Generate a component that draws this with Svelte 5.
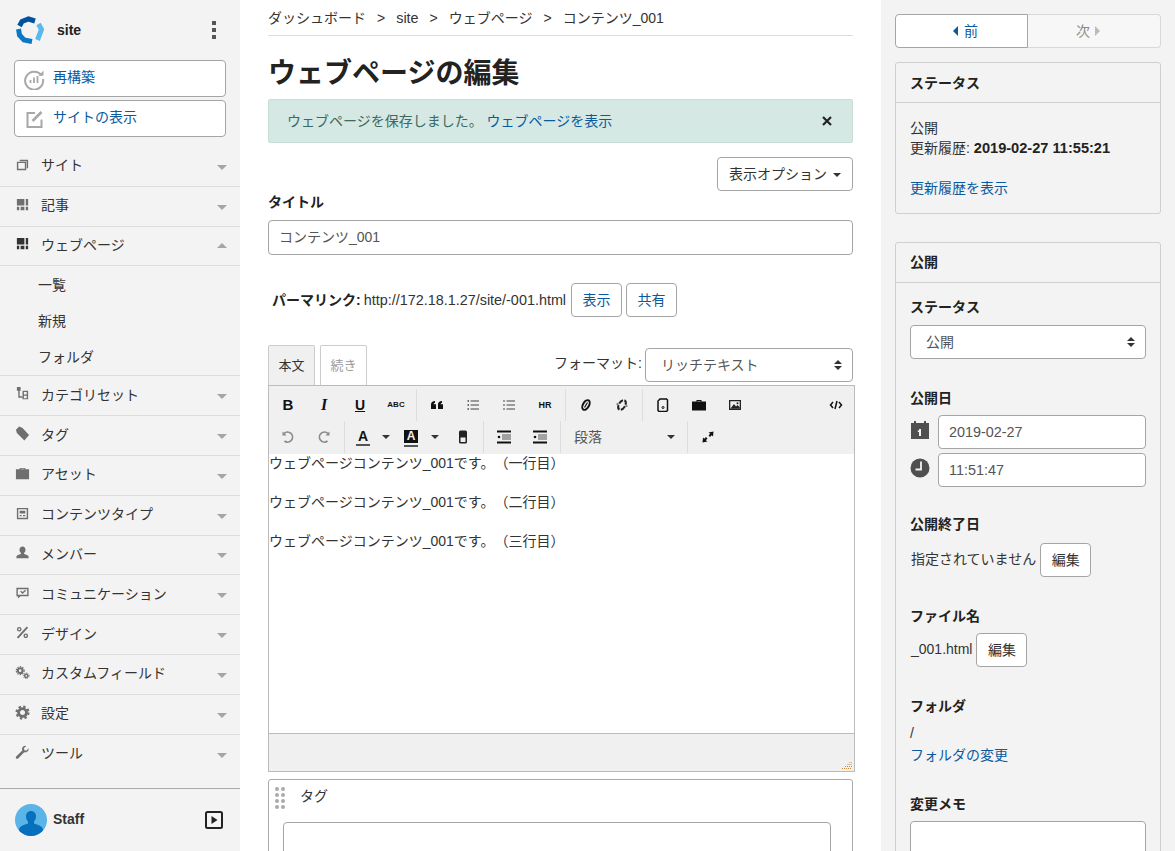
<script>
  const nav = [
    { label: 'サイト', icon: 'site' },
    { label: '記事', icon: 'entry' },
    { label: 'ウェブページ', icon: 'page', open: true, children: ['一覧', '新規', 'フォルダ'] },
    { label: 'カテゴリセット', icon: 'tree' },
    { label: 'タグ', icon: 'tag' },
    { label: 'アセット', icon: 'case' },
    { label: 'コンテンツタイプ', icon: 'ctype' },
    { label: 'メンバー', icon: 'user' },
    { label: 'コミュニケーション', icon: 'comment' },
    { label: 'デザイン', icon: 'design' },
    { label: 'カスタムフィールド', icon: 'gears' },
    { label: '設定', icon: 'gear' },
    { label: 'ツール', icon: 'wrench' }
  ]

  const crumbs = ['ダッシュボード', 'site', 'ウェブページ', 'コンテンツ_001']
  const lines = ['一行目', '二行目', '三行目']
</script>

{#snippet navIcon(name)}
  <svg class="nav-icon" viewBox="0 0 16 16" fill="#6f6f6f">
    {#if name === 'site'}
      <path d="M5 3h9v9h-1.500V4.500H5z" />
      <path fill-rule="evenodd" d="M2 5h10v9H2zM3.500 6.500v6h7v-6z" />
    {:else if name === 'entry' || name === 'page'}
      <g fill={name === 'page' ? '#333' : '#6f6f6f'}>
        <path d="M2 2h8v7H2zM11.500 2H14v7h-2.500zM2 10.500h2.500V14H2zM6 10.500h4V14H6zM11.500 10.500H14V14h-2.500z" />
      </g>
    {:else if name === 'tree'}
      <path d="M2 1h4v4H5v6h3v1.500H3.500V5H2z" />
      <path fill-rule="evenodd" d="M8 5h6v9H8zM9.500 6.500V9h3V6.500zM9.500 10.500V13h3v-2.500z" />
    {:else if name === 'tag'}
      <path d="M1 4 4.500.5 8 2l7 7.500-5 6L2 7.500z" />
    {:else if name === 'case'}
      <path fill-rule="evenodd" d="M5 3.500V2h6v1.500h4V14H1V3.500zM6 3.500h4V3H6z" />
    {:else if name === 'ctype'}
      <path fill-rule="evenodd" d="M2 2h12v12H2zM3.500 3.500v9h9v-9zM5 5h6v3H5zM5 9.500h2V11H5zM8.500 9.500H11V11H8.500z" />
    {:else if name === 'user'}
      <path d="M8 1.500c2 0 3.200 1.500 3.200 3.600 0 1.500-.6 2.700-1.500 3.400v1.200c2 .5 4.800 1.200 4.800 2.800v1.500h-13V12.500c0-1.600 2.800-2.300 4.800-2.800V8.500c-.9-.7-1.500-1.900-1.500-3.400C4.800 3 6 1.500 8 1.500z" />
    {:else if name === 'comment'}
      <path fill-rule="evenodd" d="M1.500 3h13v9H6l-3 2.500V12H1.500zM3 4.500v6h10v-6z" />
      <path d="m5.500 7 1-1L8 7.500 11 5l.8 1L8 9.500z" />
    {:else if name === 'design'}
      <path d="M12.500 1.500 14 3 3.500 14.500 2 13z" />
      <path fill-rule="evenodd" d="M4.500 2a2.500 2.500 0 1 1 0 5 2.500 2.500 0 0 1 0-5zM11.500 9a2.500 2.500 0 1 1 0 5 2.500 2.500 0 0 1 0-5zM4.500 3.500a1 1 0 1 0 0 2 1 1 0 0 0 0-2zM11.500 10.500a1 1 0 1 0 0 2 1 1 0 0 0 0-2z" />
    {:else if name === 'gears'}
      <circle cx="5.500" cy="6" r="2.500" fill="none" stroke="#6f6f6f" stroke-width="2.200" />
      <circle cx="5.500" cy="6" r="4.200" fill="none" stroke="#6f6f6f" stroke-width="1.300" stroke-dasharray="1.500 1.200" />
      <circle cx="12" cy="11.500" r="1.700" fill="none" stroke="#6f6f6f" stroke-width="1.600" />
      <circle cx="12" cy="11.500" r="3" fill="none" stroke="#6f6f6f" stroke-width="1" stroke-dasharray="1.200 1" />
    {:else if name === 'gear'}
      <circle cx="8" cy="8" r="4.200" fill="none" stroke="#6f6f6f" stroke-width="3" />
      <circle cx="8" cy="8" r="6.300" fill="none" stroke="#6f6f6f" stroke-width="2.400" stroke-dasharray="2.500 2.450" />
    {:else if name === 'wrench'}
      <path d="M14.500 3.500 12 6l-2-.5L9.500 3.500 12 1C9.500.5 7.500 2 7.500 4.500c0 .6.100 1 .3 1.400L1.500 12c-.8.800-.8 1.700-.2 2.300s1.600.6 2.300-.2l6.200-6.300c2.600.8 5.200-1.400 4.700-4.300z" />
    {/if}
  </svg>
{/snippet}

{#snippet indentIcon()}
  <svg viewBox="0 0 14 14">
    <path d="M0 1.500h14M0 12.500h14" stroke="#111" stroke-width="2" />
    <path d="M5 5h9M5 7h9M5 9h9" stroke="#555" stroke-width="1.200" />
    <circle cx="2" cy="7" r="1.300" fill="#111" />
  </svg>
{/snippet}

<div class="page">
  <aside class="sidebar">
    <div class="brand">
      <svg class="logo" viewBox="0 0 30 30" fill="none" stroke-width="5">
        <path d="M4.500 11 7 6.500 13.500 4 20 6" stroke="#00529f" />
        <path d="M3.500 14 4.500 20 9 25 17 26.500" stroke="#0b78c6" />
        <path d="M23.500 9 26.500 14.500 22.500 25" stroke="#5bb8ec" />
      </svg>
      <strong>site</strong>
      <span class="kebab"><i></i><i></i><i></i></span>
    </div>

    <div class="side-actions">
      <a class="side-btn" href="#rebuild">
        <svg viewBox="0 0 22 22" fill="none" stroke="#a8a8a8">
          <path d="M18.500 7.500A9 9 0 1 0 20 11" stroke-width="2" />
          <path d="m15.500 8 5-.5V2.500z" fill="#a8a8a8" stroke="none" />
          <path d="M7.500 15v-3M11 15V9.500M14.500 15V8" stroke-width="1.800" />
        </svg>
        <span class="up-text">再構築</span>
      </a>
      <a class="side-btn" href="#view">
        <svg viewBox="0 0 22 22" fill="none" stroke="#a8a8a8" stroke-width="2">
          <path d="M12 5H4.500v14h14v-7.500" />
          <path d="M9.500 13 18.500 4" stroke-width="2.600" />
        </svg>
        サイトの表示
      </a>
    </div>

    <nav class="side-nav">
      {#each nav as item}
        <div class="nav-row">
          {@render navIcon(item.icon)}
          <span class="nav-label">{item.label}</span>
          <span class="tri" class:up={item.open}></span>
        </div>
        {#if item.children}
          <ul class="subnav">
            {#each item.children as child}
              <li>{child}</li>
            {/each}
          </ul>
        {/if}
      {/each}
    </nav>

    <div class="user">
      <svg class="avatar" viewBox="0 0 32 32">
        <defs><clipPath id="round"><circle cx="16" cy="16" r="16" /></clipPath></defs>
        <g clip-path="url(#round)">
          <rect width="32" height="32" fill="#5ab4e8" />
          <path d="M16 7c3 0 5 2.300 5 5.500 0 2.200-.9 3.900-2 5v2c3.500 1 9 2.500 9 6.500v6H4v-6c0-4 5.500-5.500 9-6.500v-2c-1.100-1.100-2-2.800-2-5C11 9.300 13 7 16 7z" fill="#0670bd" />
        </g>
      </svg>
      <strong>Staff</strong>
      <svg class="play" viewBox="0 0 18 18">
        <rect x="1" y="1" width="16" height="16" rx="1.500" fill="none" stroke="#222" stroke-width="2" />
        <path d="M6.500 5v8l6-4z" fill="#222" />
      </svg>
    </div>
  </aside>

  <main class="content">
    <div class="crumbs">
      {#each crumbs as crumb, i}
        {#if i > 0}<span class="sep">&gt;</span>{/if}
        <span class:latin={crumb === 'site'}>{crumb}</span>
      {/each}
    </div>

    <h1>ウェブページの編集</h1>

    <div class="alert">
      <span>ウェブページを保存しました。 <a href="#page">ウェブページを表示</a></span>
      <svg viewBox="0 0 10 10" stroke="#222" stroke-width="2.200"><path d="m1 1 8 8M9 1 1 9" /></svg>
    </div>

    <div class="options">
      <button class="option-btn">表示オプション <span class="caret"></span></button>
    </div>

    <div class="label title-label">タイトル</div>
    <div class="input">コンテンツ_001</div>

    <div class="permalink">
      <strong>パーマリンク:</strong>
      <span class="url">http://172.18.1.27/site/-001.html</span>
      <button class="small-btn link">表示</button>
      <button class="small-btn link">共有</button>
    </div>

    <div class="editor-head">
      <div class="tab active">本文</div>
      <div class="tab">続き</div>
      <div class="format">
        <span class="format-label">フォーマット:</span>
        <div class="select format-select">リッチテキスト<span class="updown"></span></div>
      </div>
    </div>

    <div class="editor">
      <div class="toolbar">
        <div class="tool-row">
          <span class="tool b">B</span>
          <span class="tool i">I</span>
          <span class="tool u">U</span>
          <span class="tool mini">ABC</span>
          <span class="divider"></span>
          <span class="tool">
            <svg viewBox="0 0 14 14" fill="#111"><path d="M1 11V6.500C1 4.500 2.500 3 5 3v2c-.8 0-1.300.5-1.300 1.300H6V11zM8 11V6.500C8 4.500 9.500 3 12 3v2c-.8 0-1.300.5-1.300 1.300H13V11z" /></svg>
          </span>
          <span class="tool">
            <svg viewBox="0 0 14 14" stroke="#444" stroke-width="1.200"><path d="M4.500 3H13M4.500 7H13M4.500 11H13" /><path d="M1.500 3h1.500M1.500 7h1.500M1.500 11h1.500" stroke-width="1.500" /></svg>
          </span>
          <span class="tool">
            <svg viewBox="0 0 14 14" stroke="#444" stroke-width="1.200"><path d="M4.500 3H13M4.500 7H13M4.500 11H13M1 3h2M1 7h2M1 11h2" /></svg>
          </span>
          <span class="tool mini hr">HR</span>
          <span class="divider"></span>
          <span class="tool">
            <svg viewBox="0 0 14 14" fill="none" stroke="#111" stroke-width="2"><ellipse cx="7" cy="7" rx="3" ry="5.300" transform="rotate(30 7 7)" /><path d="M5.500 9.500 8.500 4.500" stroke-width="1.200" /></svg>
          </span>
          <span class="tool">
            <svg viewBox="0 0 14 14" fill="none" stroke="#222" stroke-width="2"><ellipse cx="7" cy="7" rx="3.200" ry="5.300" transform="rotate(30 7 7)" stroke-dasharray="5 1.500" /><path d="M1.500 6h2M10.500 8h2" stroke-width="1.200" /></svg>
          </span>
          <span class="divider"></span>
          <span class="tool">
            <svg viewBox="0 0 14 14" fill="none" stroke="#111" stroke-width="1.500"><path d="M4 1h6.500l1 1v10.500l-1 1H3l-1-1V3z" /><circle cx="7" cy="9.500" r="1" stroke-width="1" /></svg>
          </span>
          <span class="tool">
            <svg viewBox="0 0 14 14" fill="#111"><path fill-rule="evenodd" d="M4.500 3.500V2h5v1.500H14V12.500H0V3.500zM5.500 3.500h3V3h-3z" /></svg>
          </span>
          <span class="tool">
            <svg viewBox="0 0 14 14"><path fill="#222" fill-rule="evenodd" d="M1 2h12v10H1zM2.300 3.300v7.400h9.400V3.300z" /><path fill="#222" d="M2.300 10.700 6 6l2 2.500 1.500-1.500 2.200 2.200v1.500z" /><circle cx="9.500" cy="5.200" r="1" fill="#222" /></svg>
          </span>
          <span class="spacer"></span>
          <span class="tool">
            <svg viewBox="0 0 14 14" fill="none" stroke="#111" stroke-width="1.500"><path d="M4 4 1.500 7 4 10M10 4l2.500 3L10 10M8 3 6 11" /></svg>
          </span>
        </div>
        <div class="tool-row">
          <span class="tool off">
            <svg viewBox="0 0 14 14" fill="none" stroke="#8a8a8a" stroke-width="1.700"><path d="M3 3.500A5 5 0 1 1 3.500 11" /><path d="M1.500 1.500v4h4" stroke="none" fill="#8a8a8a" /></svg>
          </span>
          <span class="tool off">
            <svg viewBox="0 0 14 14" fill="none" stroke="#8a8a8a" stroke-width="1.700"><path d="M11 3.500a5 5 0 1 0-.5 7.500" /><path d="M12.500 1.500v4h-4" stroke="none" fill="#8a8a8a" /></svg>
          </span>
          <span class="divider"></span>
          <span class="tool narrow color-a"><span>A</span></span>
          <span class="mini-caret"></span>
          <span class="tool narrow color-bg"><b>A</b></span>
          <span class="mini-caret second"></span>
          <span class="tool eraser">
            <svg viewBox="0 0 14 14"><rect x="3" y="0.500" width="8" height="13" rx="1.500" fill="#222" /><rect x="4.500" y="7.500" width="5" height="4.500" fill="#eee" /></svg>
          </span>
          <span class="divider"></span>
          <span class="tool">{@render indentIcon()}</span>
          <span class="tool">{@render indentIcon()}</span>
          <span class="divider"></span>
          <span class="block-select">段落<span class="mini-caret dark"></span></span>
          <span class="divider"></span>
          <span class="tool">
            <svg viewBox="0 0 14 14" fill="#111"><path d="M12.500 1.500 12 6.500 10.700 5.200 9 7 7.500 5.500 9.200 3.800 7.500 2.500zM1.500 12.500 2 7.500 3.300 8.800 5 7 6.500 8.500 4.800 10.200 6.500 11.500z" /></svg>
          </span>
        </div>
      </div>

      <div class="editor-body">
        {#each lines as line}
          <p>ウェブページコンテンツ_001です。（{line}）</p>
        {/each}
      </div>

      <div class="statusbar">
        <svg viewBox="0 0 10 10" stroke="#c98a3c" stroke-width="1"><path d="M0 9.500h10M3 7.500h7M5.500 5.500H10M7.500 3.500H10" stroke-dasharray="1 1" /></svg>
      </div>
    </div>

    <section class="tag-box">
      <div class="tag-head">
        <span class="grip">
          {#each Array(8) as _}<i></i>{/each}
        </span>
        <span class="tag-title">タグ</span>
      </div>
      <div class="tag-input"></div>
    </section>
  </main>

  <aside class="aside-right">
    <div class="pager">
      <a class="pager-btn prev" href="#prev"><span class="arrow to-left"></span>前</a>
      <a class="pager-btn next" href="#next">次<span class="arrow to-right"></span></a>
    </div>

    <section class="panel status-panel">
      <h2>ステータス</h2>
      <div class="panel-body">
        <div>公開</div>
        <div>更新履歴: <strong>2019-02-27 11:55:21</strong></div>
        <a class="history" href="#history">更新履歴を表示</a>
      </div>
    </section>

    <section class="panel publish-panel">
      <h2>公開</h2>
      <div class="panel-body">
        <div class="label first">ステータス</div>
        <div class="select status-select">公開<span class="updown"></span></div>

        <div class="label date-label">公開日</div>
        <div class="date-row">
          <svg viewBox="0 0 20 20" fill="#4f4f4f">
            <path fill-rule="evenodd" d="M1 3h3V1h2v2h8V1h2v2h3v16H1zM9 9v1.500H7.800V12H9v4h2V9z" />
          </svg>
          <div class="input">2019-02-27</div>
        </div>
        <div class="date-row time">
          <svg viewBox="0 0 20 20">
            <circle cx="10" cy="10" r="9.500" fill="#4f4f4f" />
            <path d="M11 3.500v8H5.500" fill="none" stroke="#f3f3f3" stroke-width="1.800" />
          </svg>
          <div class="input">11:51:47</div>
        </div>

        <div class="label end-label">公開終了日</div>
        <div class="value-row">
          <span>指定されていません</span>
          <button class="small-btn">編集</button>
        </div>

        <div class="label file-label">ファイル名</div>
        <div class="value-row">
          <span>_001.html</span>
          <button class="small-btn">編集</button>
        </div>

        <div class="label folder-label">フォルダ</div>
        <div class="slash">/</div>
        <a class="folder-link" href="#folder">フォルダの変更</a>

        <div class="label memo-label">変更メモ</div>
        <div class="memo"></div>
      </div>
    </section>
  </aside>
</div>

<style>
  :global(body) {
    margin: 0;
    background: #fff;
  }

  .page {
    display: grid;
    grid-template-columns: 240px 641px 294px;
    height: 851px;
    overflow: hidden;
    color: #333;
    font: 14px/20px "Liberation Sans", "Noto Sans CJK JP", sans-serif;
    text-spacing-trim: space-all;
  }

  a {
    color: #0a5a9e;
    text-decoration: none;
  }

  svg {
    display: block;
    flex: none;
  }

  /* sidebar */
  .sidebar {
    display: flex;
    flex-direction: column;
    height: 851px;
    background: #f3f3f3;
  }

  .brand {
    display: flex;
    align-items: center;
    height: 60px;
    padding: 0 22px 0 15px;
  }

  .logo {
    width: 30px;
    height: 30px;
  }

  .brand strong {
    margin-left: 12px;
    color: #222;
  }

  .kebab {
    display: flex;
    flex-direction: column;
    gap: 3px;
    margin: 0 2px 0 auto;
  }

  .kebab i {
    width: 4px;
    height: 4px;
    background: #555;
  }

  .side-actions {
    display: flex;
    flex-direction: column;
    gap: 3px;
    padding: 0 14px;
  }

  .side-btn {
    display: flex;
    align-items: center;
    gap: 8px;
    box-sizing: border-box;
    height: 37px;
    padding: 0 8px 3px;
    background: #fff;
    border: 1px solid #a5a5a5;
    border-radius: 4px;
  }

  .side-btn svg {
    width: 22px;
    height: 22px;
    margin-top: 3px;
  }

  .up-text {
    margin-top: -1px;
  }

  .side-nav {
    flex: 1;
    margin-top: 10px;
  }

  .nav-row {
    display: flex;
    align-items: center;
    box-sizing: border-box;
    height: 39.8px;
    padding: 0 13px 2px 15px;
    border-bottom: 1px solid #dcdcdc;
  }

  .nav-row:nth-last-child(1) {
    border-bottom: 0;
  }

  .nav-icon {
    width: 15px;
    height: 15px;
    margin-top: -2px;
  }

  .nav-label {
    margin-left: 11px;
  }

  .tri {
    width: 0;
    height: 0;
    margin: 4px 0 0 auto;
    border: 5px solid transparent;
    border-top: 5px solid #a5a5a5;
    border-bottom: 0;
  }

  .tri.up {
    margin-top: 1px;
    border-top: 0;
    border-bottom: 5px solid #a5a5a5;
  }

  .subnav {
    margin: 0;
    padding: 0 0 1px;
    list-style: none;
    border-bottom: 1px solid #dcdcdc;
  }

  .subnav li {
    height: 36px;
    padding-left: 38px;
    line-height: 38px;
  }

  .user {
    display: flex;
    align-items: center;
    height: 62px;
    padding: 0 17px 0 15px;
    border-top: 1px solid #aaa;
  }

  .avatar {
    width: 32px;
    height: 32px;
  }

  .user strong {
    margin: -3px 0 0 6px;
  }

  .play {
    width: 18px;
    height: 18px;
    margin-left: auto;
  }

  /* main column */
  .content {
    padding: 0 28px;
    min-width: 0;
  }

  .crumbs {
    display: flex;
    gap: 11px;
    height: 35px;
    line-height: 36px;
    border-bottom: 1px solid #ddd;
  }

  .crumbs .sep {
    font-size: 14px;
  }

  .crumbs .latin {
    font-size: 14.4px;
  }

  h1 {
    height: 63px;
    margin: 0;
    color: #222;
    font-size: 28px;
    line-height: 75px;
  }

  .alert {
    display: flex;
    align-items: center;
    justify-content: space-between;
    box-sizing: border-box;
    height: 44px;
    padding: 0 20px 0 18px;
    background: #d5e8e4;
    border: 1px solid #c6ddd8;
    border-radius: 2px;
    color: #3b6a60;
  }

  .alert svg {
    width: 10px;
    height: 10px;
  }

  .options {
    display: flex;
    justify-content: flex-end;
    margin-top: 14px;
  }

  button {
    font: inherit;
    color: #333;
    background: #fff;
    border: 1px solid #a5a5a5;
    border-radius: 4px;
    padding: 0;
  }

  .option-btn {
    width: 136px;
    height: 34px;
  }

  .caret {
    display: inline-block;
    margin: 0 0 2px 2px;
    border: 4px solid transparent;
    border-top-color: #333;
    border-bottom: 0;
  }

  .label {
    color: #222;
    font-weight: 700;
  }

  .title-label {
    margin-top: 1px;
  }

  .input {
    box-sizing: border-box;
    height: 35px;
    padding: 0 10px;
    color: #555;
    line-height: 33px;
    background: #fff;
    border: 1px solid #a5a5a5;
    border-radius: 4px;
  }

  .title-label + .input {
    margin-top: 8px;
  }

  .permalink {
    display: flex;
    align-items: center;
    gap: 4px;
    margin-top: 28px;
    padding-left: 4px;
  }

  .permalink strong {
    margin-right: -1px;
    color: #222;
  }

  .url {
    margin-right: 1px;
    font-size: 14.4px;
  }

  .small-btn {
    width: 51px;
    height: 34px;
  }

  .small-btn.link {
    color: #0a5a9e;
  }

  .editor-head {
    display: flex;
    align-items: flex-end;
    gap: 5px;
    height: 40px;
    margin-top: 28px;
  }

  .tab {
    box-sizing: border-box;
    width: 47px;
    height: 40px;
    color: #999;
    line-height: 39px;
    font-size: 13px;
    text-align: center;
    background: #fff;
    border: 1px solid #ccc;
    border-bottom: 0;
    border-radius: 2px 2px 0 0;
  }

  .tab.active {
    color: #333;
    background: #f0f0f0;
  }

  .format {
    display: flex;
    align-items: center;
    gap: 3px;
    margin: 0 0 3px auto;
  }

  .format-label {
    margin-top: -5px;
  }

  .select {
    position: relative;
    box-sizing: border-box;
    height: 34px;
    padding-left: 15px;
    color: #555;
    line-height: 32px;
    background: #fff;
    border: 1px solid #a5a5a5;
    border-radius: 4px;
  }

  .format-select {
    width: 208px;
  }

  .updown {
    position: absolute;
    top: 11px;
    right: 10px;
    width: 8px;
    height: 10px;
  }

  .updown::before,
  .updown::after {
    content: '';
    position: absolute;
    left: 0;
    border: 4px solid transparent;
  }

  .updown::before {
    top: 0;
    border-top: 0;
    border-bottom-color: #333;
  }

  .updown::after {
    bottom: 0;
    border-bottom: 0;
    border-top-color: #333;
  }

  .editor {
    width: 587px;
    box-sizing: border-box;
    border: 1px solid #bbb;
  }

  .toolbar {
    box-sizing: border-box;
    height: 69px;
    padding: 3px 0 0 1px;
    background: #f0f0f0;
  }

  .tool-row {
    display: flex;
    align-items: center;
    height: 32px;
  }

  .tool {
    display: flex;
    align-items: center;
    justify-content: center;
    width: 36px;
    height: 32px;
    color: #111;
    font-weight: 700;
  }

  .tool svg {
    width: 14px;
    height: 14px;
  }

  .tool.narrow {
    width: 26px;
  }

  .tool.b {
    font-size: 15px;
  }

  .tool.i {
    font-family: "Liberation Serif", serif;
    font-size: 16px;
    font-style: italic;
  }

  .tool.u {
    font-size: 14px;
    text-decoration: underline;
  }

  .tool.mini {
    font-size: 8px;
  }

  .tool.hr {
    font-size: 9px;
  }

  .tool.eraser {
    width: 32px;
    margin-right: 2px;
  }

  .divider {
    width: 1px;
    height: 32px;
    margin: 0 2px;
    background: #ddd;
  }

  .spacer {
    flex: 1;
  }

  .color-a {
    margin-left: 3px;
  }

  .color-a span {
    display: block;
    width: 14px;
    margin-top: 1px;
    padding-bottom: 1px;
    color: #111;
    font-size: 14px;
    line-height: 14px;
    text-align: center;
    border-bottom: 2px solid #555;
  }

  .color-bg b {
    display: block;
    width: 14px;
    height: 13px;
    margin-top: -2px;
    color: #f0f0f0;
    font-size: 12px;
    line-height: 13px;
    text-align: center;
    background: #111;
    box-shadow: 0 2px 0 0 #f0f0f0, 0 4px 0 0 #555;
  }

  .mini-caret {
    width: 0;
    height: 0;
    margin: 0 8px 0 6px;
    border: 4px solid transparent;
    border-top-color: #333;
    border-bottom: 0;
  }

  .mini-caret.second {
    margin: 0 8px 0 7px;
  }

  .block-select {
    display: flex;
    align-items: center;
    justify-content: space-between;
    box-sizing: border-box;
    width: 122px;
    padding-left: 11px;
    color: #555;
  }

  .mini-caret.dark {
    margin: 0 10px 0 0;
  }

  .editor-body {
    box-sizing: border-box;
    height: 279px;
    background: #fff;
  }

  .editor-body p {
    margin: -1px 0 20px;
    padding-bottom: 1px;
    line-height: 19px;
  }

  .statusbar {
    display: flex;
    align-items: flex-end;
    justify-content: flex-end;
    box-sizing: border-box;
    height: 38px;
    padding: 0 2px 2px 0;
    background: #f0f0f0;
    border-top: 1px solid #bbb;
  }

  .statusbar svg {
    width: 10px;
    height: 10px;
  }

  .tag-box {
    box-sizing: border-box;
    height: 120px;
    margin-top: 7px;
    padding: 0 21px 0 14px;
    border: 1px solid #aaa;
    border-radius: 3px;
  }

  .tag-head {
    display: flex;
    align-items: flex-start;
    height: 35px;
    margin-left: -8px;
    padding-top: 7px;
  }

  .tag-title {
    margin-top: -1px;
  }

  .grip {
    display: grid;
    grid-template-columns: 4px 4px;
    gap: 2px 2px;
    margin: 0 15px 0 0;
  }

  .grip i {
    width: 4px;
    height: 4px;
    background: #aaa;
    border-radius: 50%;
  }

  .tag-input {
    box-sizing: border-box;
    height: 60px;
    background: #fff;
    border: 1px solid #a5a5a5;
    border-radius: 4px;
  }

  /* right column */
  .aside-right {
    padding: 14px 14px 0;
    background: #f3f3f3;
  }

  .pager {
    display: grid;
    grid-template-columns: 133px 133px;
    height: 34px;
  }

  .pager-btn {
    display: flex;
    align-items: center;
    justify-content: center;
    box-sizing: border-box;
  }

  .prev {
    gap: 6px;
    padding-left: 8px;
    background: #fff;
    border: 1px solid #a5a5a5;
    border-radius: 4px 0 0 4px;
  }

  .next {
    gap: 5px;
    padding-right: 12px;
    color: #888;
    background: #f7f7f7;
    border: 1px solid #d8d8d8;
    border-left: 0;
    border-radius: 0 4px 4px 0;
  }

  .arrow {
    width: 0;
    height: 0;
    border: 5px solid transparent;
  }

  .arrow.to-left {
    border-left: 0;
    border-right-color: #0a5a9e;
  }

  .arrow.to-right {
    border-right: 0;
    border-left-color: #bbb;
  }

  .panel {
    box-sizing: border-box;
    border: 1px solid #cfcfcf;
    border-radius: 3px;
  }

  .panel h2 {
    height: 39px;
    margin: 0;
    padding-left: 14px;
    color: #222;
    font-size: 14px;
    line-height: 39px;
    border-bottom: 1px solid #cfcfcf;
  }

  .panel-body {
    padding: 14px 14px 0;
  }

  .status-panel {
    height: 152px;
    margin-top: 14px;
  }

  .status-panel h2 {
    line-height: 41px;
  }

  .status-panel .panel-body {
    padding-top: 15px;
  }

  .status-panel strong {
    color: #222;
    font-size: 14.6px;
  }

  .history {
    display: block;
    margin-top: 20px;
  }

  .publish-panel {
    height: 640px;
    margin-top: 28px;
  }

  .label.first {
    margin-top: 0;
  }

  .status-select {
    margin-top: 8px;
  }

  .date-label {
    margin-top: 29px;
  }

  .date-row {
    display: flex;
    align-items: center;
    gap: 8px;
    margin-top: 7px;
  }

  .date-row.time {
    margin-top: 4px;
  }

  .date-row svg {
    width: 20px;
    height: 20px;
    margin-top: -4px;
  }

  .date-row .input {
    flex: 1;
    height: 34px;
    font-size: 14.4px;
    line-height: 32px;
  }

  .end-label {
    margin-top: 27px;
  }

  .value-row {
    display: flex;
    align-items: center;
    gap: 4px;
    margin-top: 9px;
  }

  .value-row span {
    margin: -3px 0 0 1px;
  }

  .file-label {
    margin-top: 29px;
  }

  .file-label + .value-row {
    margin-top: 7px;
  }

  .folder-label {
    margin-top: 29px;
  }

  .slash {
    margin-top: 7px;
  }

  .folder-link {
    display: block;
    margin-top: 2px;
  }

  .memo-label {
    margin-top: 29px;
  }

  .memo {
    height: 80px;
    margin-top: 7px;
    background: #fff;
    border: 1px solid #a5a5a5;
    border-radius: 4px;
  }
</style>
